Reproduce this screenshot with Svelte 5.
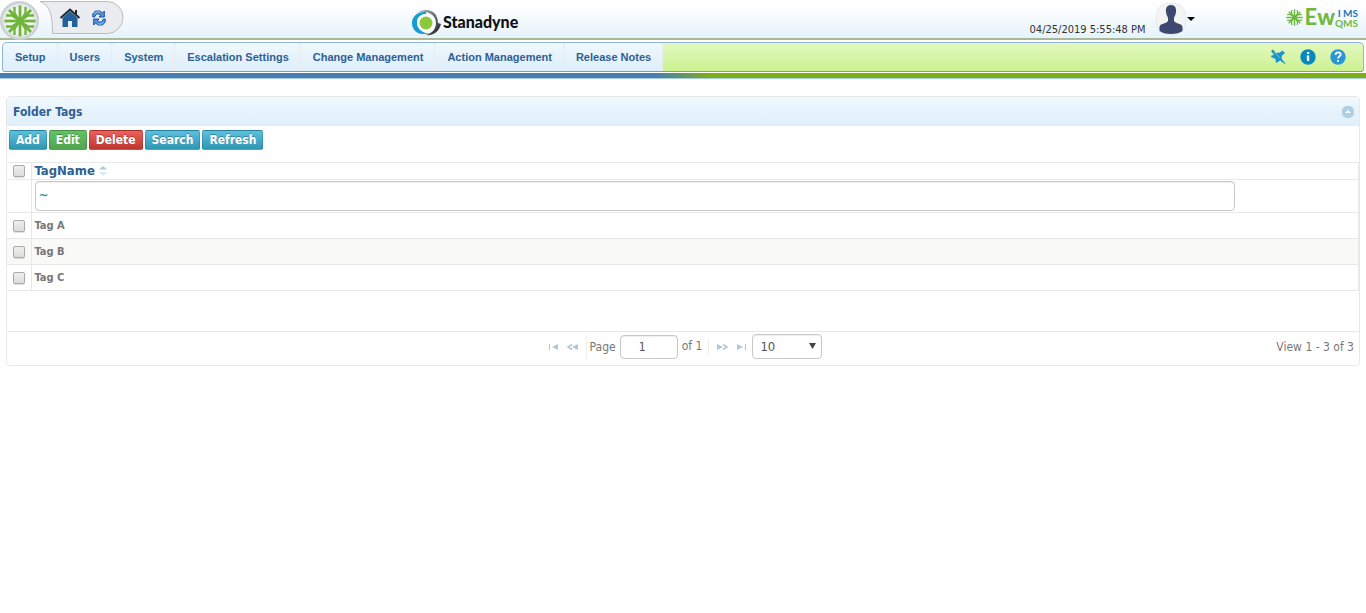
<script>
  const menu = ['Setup', 'Users', 'System', 'Escalation Settings', 'Change Management', 'Action Management', 'Release Notes'];
  const tags = ['Tag A', 'Tag B', 'Tag C'];
  const actions = [
    { label: 'Add', tone: 'blue' },
    { label: 'Edit', tone: 'green' },
    { label: 'Delete', tone: 'red' },
    { label: 'Search', tone: 'blue' },
    { label: 'Refresh', tone: 'blue' }
  ];
  const quarters = [0, 90, 180, 270];
  let filter = $state('~');
  let page = $state('1');
  let size = $state('10');
</script>

{#snippet burst()}
  {#each quarters as angle}
    <g transform="rotate({angle} 20 20)">
      <path d="M20 20V4.500" />
      <path d="M20 20L31 9" />
      <path d="M21 19L25.500 12V6M21 19L28 14.500H34" stroke-width="2.300" />
    </g>
  {/each}
{/snippet}

<header>
  <div class="left">
    <a class="orb" href="#start" aria-label="Start">
      <svg width="40" height="40" viewBox="0 0 40 40">
        <defs>
          <radialGradient id="orb"><stop offset=".6" stop-color="#f5f7f7" /><stop offset=".86" stop-color="#e0e5e6" /><stop offset="1" stop-color="#bcc3c6" /></radialGradient>
        </defs>
        <circle cx="19.500" cy="20.500" r="19" fill="url(#orb)" stroke="#cbd1d3" />
        <g fill="none" stroke="#6fb53a" stroke-width="2.800" transform="translate(0 1)">{@render burst()}</g>
      </svg>
    </a>
    <div class="tools">
      <svg class="tab" width="84" height="36" viewBox="0 0 84 36" aria-hidden="true">
        <path d="M0 1.500H67a16 16 0 0 1 0 32H12.500C12.500 15 10 5 0 1.500Z" fill="#ebecef" stroke="#b9bdc1" />
      </svg>
      <a class="tool" href="#home" aria-label="Home">
        <svg width="22" height="22" viewBox="0 0 22 22"><path d="M16 3h2v5l-2-2z" fill="#222" /><path d="M3.500 11L11 4l7.500 7v9H13v-6H9v6H3.500z" fill="#22629b" /><path d="M1.500 11L11 2.500 20.500 11" fill="none" stroke="#252a30" stroke-width="2" /></svg>
      </a>
      <a class="tool" href="#reload" aria-label="Reload">
        <svg width="16" height="18" viewBox="0 0 18 18" preserveAspectRatio="none"><g fill="#4d93dc" stroke="#174fa3"><path d="M2 8V5l3-3h5l3 2 2-2v6H9l2-2-2-1H6L4 8z" /><path d="M16 10v3l-3 3H8l-3-2-2 2v-6h6l-2 2 2 1h3l2-3z" /></g><path d="M4 5l2-2h4M14 13l-2 2H8" fill="none" stroke="#a3cef2" /></svg>
      </a>
    </div>
  </div>

  <div class="company">
    <svg width="30" height="28" viewBox="0 0 30 28" aria-hidden="true">
      <defs><linearGradient id="ring" x1="0" x2="1" y1="0" y2="1"><stop stop-color="#b4b8bb" /><stop offset=".55" stop-color="#666" /><stop offset="1" stop-color="#16181a" /></linearGradient></defs>
      <path d="M4 5C10-1 20 0 24 6q2 4 2 8l3 1c-2 8-8 12-16 11 7-1 11-6 11-12C24 4 11 0 4 5z" fill="url(#ring)" />
      <path d="M14 3C5 2 0 8 0 14c0 6 4 11 11 11h7C10 24 5 20 5 13c0-5 4-8 9-8z" fill="#169bd2" />
      <circle cx="14" cy="14" r="9" fill="#fff" /><circle cx="14" cy="14" r="6.500" fill="#8ac83c" />
    </svg>
    <span>Stanadyne</span>
  </div>

  <div class="account">
    <time>04/25/2019 5:55:48 PM</time>
    <button class="user" aria-label="Account menu">
      <svg width="30" height="32" viewBox="0 0 30 32"><rect x=".5" y=".5" width="29" height="31" rx="12" fill="#f4f4f4" stroke="#e6e9ea" /><path d="M15 2c-4 0-5.500 3-5 7 .3 3 1.500 4 2 6v3c-2 3-8 2-8.500 6v4q4 3 11.500 3t11.500-3v-4c-.5-4-6.500-3-8.500-6v-3c.5-2 1.700-3 2-6C20.500 5 19 2 15 2z" fill="#3c4870" /></svg>
      <svg width="8" height="5" viewBox="0 0 8 5"><path d="M0 0h8L4 4z" /></svg>
    </button>
  </div>

  <div class="product">
    <svg width="19" height="19" viewBox="2 2 36 36" aria-hidden="true"><g fill="none" stroke="#6cb83e" stroke-width="2.800">{@render burst()}</g></svg>
    <span class="ew">E<b>w</b></span>
    <span class="stack"><span class="ims">I MS</span><span>QMS</span></span>
  </div>
</header>

<nav>
  <div class="menu">
    {#each menu as item}<a href="#{item}">{item}</a>{/each}
  </div>
  <div class="help">
    <button aria-label="Pin"><svg width="16" height="16" viewBox="0 0 16 16"><path d="M1 2l2-1.500L6 4l4-.5L12.500 1.500 15 4l-3 2.500-.5 3 4 5-.5.500-5-3.500L7 13.500 6 14 5.500 10 1 8l.5-1.500L4 6z" fill="#1a94ce" /><path d="M4 3l6 6" stroke="#5cc0e7" /></svg></button>
    <button aria-label="Information"><svg width="16" height="16" viewBox="0 0 16 16"><circle cx="8" cy="8" r="7.700" fill="#0789c0" /><path d="M7 3h2.200v2H7zM6.700 6.500h2.500V12H7z" fill="#fff" /></svg></button>
    <button aria-label="Help"><svg width="16" height="16" viewBox="0 0 16 16"><circle cx="8" cy="8" r="7.700" fill="#2498db" /><path d="M5.500 6c0-3.500 5.500-3.200 5.200-.4C10.500 7.300 8 7.200 8 9.500M8 11v2" fill="none" stroke="#fff" stroke-width="1.800" /></svg></button>
  </div>
</nav>
<div class="stripe"></div>

<main>
  <section>
    <div class="title">
      <h1>Folder Tags</h1>
      <button aria-label="Collapse"><svg width="12" height="12" viewBox="0 0 12 12"><rect width="12" height="12" rx="5" fill="#afcfe7" /><path d="M3 7l3-3 3 3z" fill="#fff" /></svg></button>
    </div>
    <div class="actions">
      {#each actions as a}<button class={a.tone}>{a.label}</button>{/each}
    </div>
    <table>
      <thead>
        <tr class="names">
          <th class="check"><input type="checkbox" aria-label="Select all" /></th>
          <th><button class="sort">TagName <svg width="8" height="12" viewBox="0 0 8 12" aria-hidden="true"><path d="M0 4.500L4 1l4 3.500z" fill="#a9cbe4" /><path d="M0 7h8l-4 4z" fill="#dceaf4" /></svg></button></th>
        </tr>
        <tr class="filter">
          <th class="check"></th>
          <th><input type="text" aria-label="Filter by TagName" bind:value={filter} /></th>
        </tr>
      </thead>
      <tbody>
        {#each tags as tag}
          <tr><td class="check"><input type="checkbox" aria-label="Select {tag}" /></td><td>{tag}</td></tr>
        {/each}
      </tbody>
    </table>
    <footer>
      <div class="pager">
        <button aria-label="First page"><svg width="10" height="8" viewBox="0 0 10 8"><path d="M0 1h1v6H0zM9 1v6L3 4z" /></svg></button>
        <button class="prev" aria-label="Previous page"><svg width="12" height="8" viewBox="0 0 12 8"><path d="M11 1v6L5 4z" /><path d="M5 1.500L1 4l4 2.500" class="line" /></svg></button>
        <label class="current">Page <input type="text" bind:value={page} /></label>
        <span class="total">of 1</span>
        <button aria-label="Next page"><svg width="12" height="8" viewBox="0 0 12 8"><path d="M1 1v6l6-3z" /><path d="M7 1.500L11 4 7 6.500" class="line" /></svg></button>
        <button class="last" aria-label="Last page"><svg width="10" height="8" viewBox="0 0 10 8"><path d="M9 1h1v6H9zM1 1v6l6-3z" /></svg></button>
        <span class="size">
          <select aria-label="Rows per page" bind:value={size}><option>10</option><option>20</option><option>50</option></select>
          <svg width="8" height="6" viewBox="0 0 8 6" aria-hidden="true"><path d="M0 0h7L3.500 6z" /></svg>
        </span>
      </div>
      <span class="view">View 1 - 3 of 3</span>
    </footer>
  </section>
</main>

<style>
  :global(body) { margin: 0; background: #fff; font-family: "DejaVu Sans Condensed", "DejaVu Sans", sans-serif; font-stretch: condensed; font-size: 12px; color: #777; }
  * { box-sizing: border-box; }
  svg { display: block; flex: none; }
  button { font: inherit; border: 0; padding: 0; background: none; cursor: pointer; }
  header { display: grid; grid-template-columns: 412px 1fr auto auto; height: 40px; border-bottom: 2px solid #abb796; background: linear-gradient(#fff 10%, #e6f3fb); }
  .left { display: flex; }
  .orb { position: relative; z-index: 1; height: 40px; }
  .tools { position: relative; display: flex; gap: 10px; height: 36px; padding: 7px 0 0 19px; }
  .tab { position: absolute; top: 0; left: 0; }
  .tool { position: relative; }
  .tool + .tool { padding-top: 2px; }
  .company { display: flex; align-items: center; gap: 1px; padding-top: 6px; font: 900 16px/22px Lato, sans-serif; color: #111; }
  .company span { padding-bottom: 3px; }
  .account { display: flex; align-items: flex-end; gap: 10px; margin-right: 90px; color: #333; font-size: 11px; }
  time { padding-bottom: 4px; }
  .user { display: flex; align-items: center; gap: 1px; height: 32px; margin-bottom: 5px; }
  .product { display: flex; align-items: center; padding: 0 8px 6px 0; color: #71b840; font-family: Lato, sans-serif; }
  .ew { font-size: 22px; line-height: 22px; font-weight: 700; padding-left: 1px; }
  .ew b { font-size: 22px; }
  .stack { display: flex; flex-direction: column; align-items: flex-end; font-size: 10px; line-height: 10px; font-weight: 700; padding-top: 2px; }
  .ims { color: #1f78b8; }

  nav { display: flex; justify-content: space-between; align-items: stretch; margin: 2px; margin-bottom: 1px; height: 30px; border: 1px solid #90b6d9; border-bottom-color: #77b843; border-radius: 5px 5px 3px 3px; background: linear-gradient(#e3f8c0, #cbf290); overflow: hidden; }
  .menu { display: flex; }
  .menu a { padding: 0 11px 0 12px; border-right: 1px solid #e9ebed; border-radius: 4px 4px 0 0; background: linear-gradient(#eef8fe, #dfeefa); font: bold 11px/28px "Liberation Sans", sans-serif; color: #2e6093; text-decoration: none; }
  .help { display: flex; align-items: center; gap: 14px; padding-right: 17px; }
  .stripe { height: 6px; background: linear-gradient(90deg, #477fb1 48%, #7fae15 52%); border-bottom: 1px solid #a5cce9; }

  main { padding: 17px 6px; }
  section { border: 1px solid #e8e8e8; border-radius: 4px; }
  .title { display: flex; justify-content: space-between; align-items: center; height: 29px; padding: 0 5px 0 6px; background: linear-gradient(#eff8fe, #dfeffb); }
  h1 { margin: 0; font-size: 12px; color: #2e6093; }
  .actions { display: flex; gap: 2px; padding: 4px 2px 12px; }
  .actions button { height: 20px; padding: 0 6px; border: 1px solid #0002; border-radius: 2px; color: #fff; font-size: 12px; line-height: 18px; font-weight: bold; text-shadow: 0 -1px 0 #0004; }
  .actions .blue { background: linear-gradient(#5bc0de, #2f96b4); }
  .actions .green { background: linear-gradient(#62c462, #51a351); }
  .actions .red { background: linear-gradient(#ee5f5b, #bd362f); }
  table { width: 100%; border-collapse: collapse; table-layout: fixed; border-top: 1px solid #e8e8e8; }
  th, td { height: 26px; padding: 0 0 0 3px; border-bottom: 1px solid #e8e8e8; border-right: 1px solid #e8e8e8; text-align: left; font-weight: bold; font-size: 11px; }
  .check { width: 24px; padding: 0; text-align: center; }
  .names th { height: 17px; font-size: 13px; line-height: 14px; color: #2e6093; }
  .sort { display: flex; align-items: center; gap: 4px; color: #2e6093; line-height: 14px; }
  .filter th { height: 33px; }
  .filter input { display: block; width: calc(100% - 123px); height: 30px; padding: 0 3px 2px; color: #2f96b4; font: bold 12px "DejaVu Sans", sans-serif; }
  input[type="text"], select { border: 1px solid #c8c8c8; border-radius: 4px; background: #fff; box-shadow: inset 0 1px 1px #0001; outline-offset: 0; }
  input[type="checkbox"] { appearance: none; display: block; width: 12px; height: 12px; margin: 0 auto; border: 1px solid #aaa; border-radius: 2px; background: linear-gradient(#eee, #dcdcdc); box-shadow: 0 1px 1px #0002; }
  input[type="checkbox"]:checked { background: #2f96b4; }
  tbody tr:nth-child(even) { background: #f9f9f8; }
  footer { display: grid; grid-template-columns: 1fr auto 1fr; align-items: center; height: 34px; margin-top: 40px; padding-bottom: 4px; border-top: 1px solid #e8e8e8; }
  .pager { grid-column: 2; display: flex; align-items: center; height: 29px; margin-left: 5px; }
  .pager svg { fill: #b1c7d8; }
  .pager .line { fill: none; stroke: #b1c7d8; stroke-width: 1.500; }
  .prev { margin: 0 7px 0 8px; }
  .current { display: flex; align-items: center; gap: 4px; border-left: 1px solid #eee; padding-left: 3px; line-height: 20px; }
  .current input { width: 58px; height: 24px; padding: 0 18px; font: inherit; color: #555; }
  .total { padding: 0 6px 2px 4px; border-right: 1px solid #eee; margin-right: 7px; }
  .last { margin: 0 6px 0 8px; }
  .size { position: relative; }
  .size select { appearance: none; display: block; width: 70px; height: 25px; padding: 0 7px; color: #555; font: inherit; font-size: 13px; }
  .pager .size svg { position: absolute; right: 5px; top: 9px; fill: #444; pointer-events: none; }
  .view { padding-right: 5px; text-align: right; }
</style>
